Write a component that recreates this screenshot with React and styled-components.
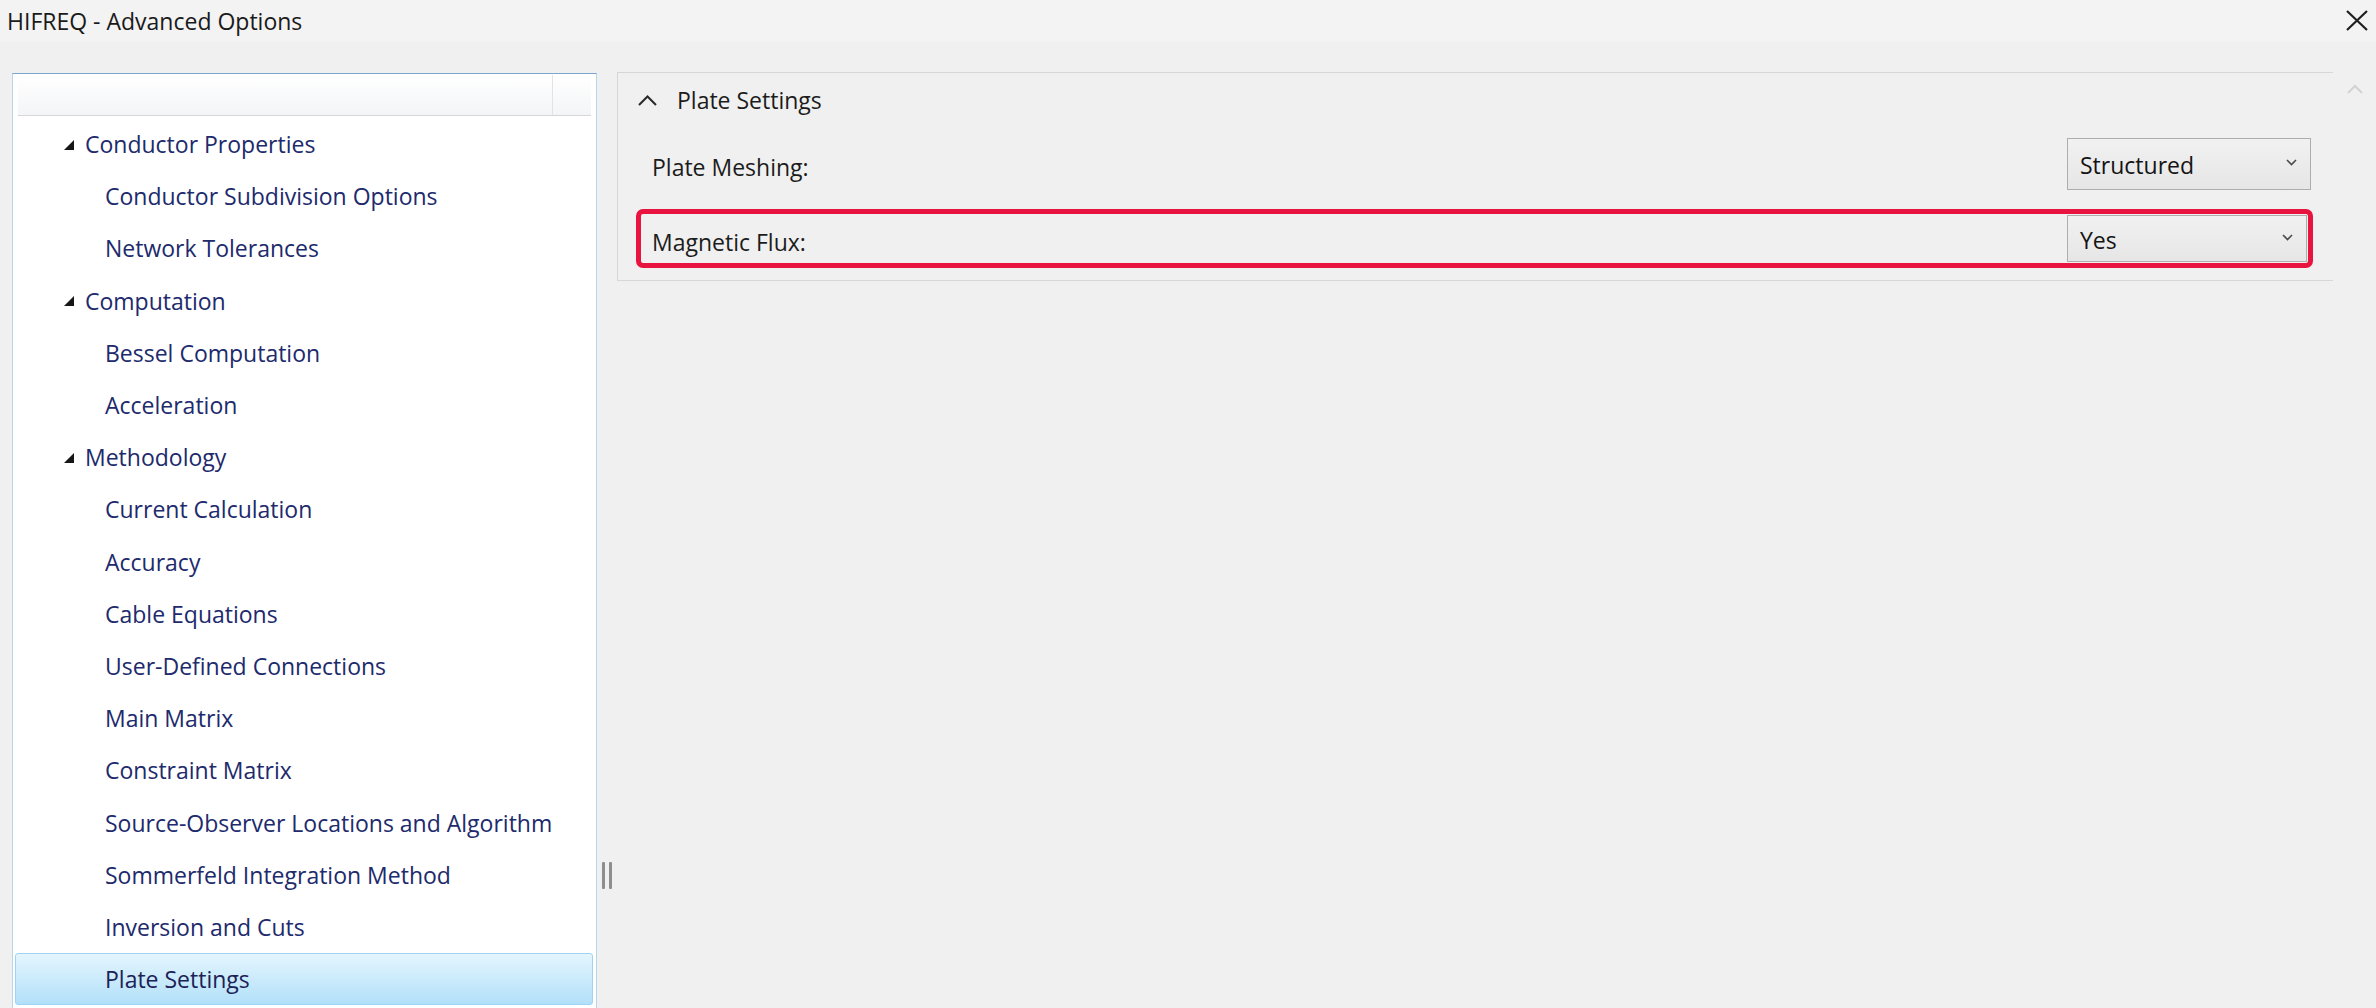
import React from 'react';
import styled, { createGlobalStyle } from 'styled-components';

const GlobalStyle = createGlobalStyle`
  html, body {
    margin: 0;
    padding: 0;
    background: #f0f0f0;
  }
  body {
    font-family: "Open Sans", "Noto Sans", "Liberation Sans", sans-serif;
  }
`;

const Window = styled.div`
  width: 2376px;
  height: 1008px;
  display: flex;
  flex-direction: column;
  overflow: hidden;
  background: #f0f0f0;
`;

const TitleBar = styled.div`
  height: 42px;
  display: flex;
  align-items: center;
  justify-content: space-between;
  padding: 0 7px 0 7px;
  background: #f3f3f3;
  color: #1a1a1a;
  font-size: 23px;
`;

const CloseButton = styled.div`
  width: 22px;
  height: 22px;
  margin-right: 1px;
  margin-top: -2px;
  display: flex;
  align-items: center;
  justify-content: center;
`;

const Body = styled.div`
  flex: 1;
  display: flex;
  padding: 31px 0 0 12px;
  min-height: 0;
`;

const TreePanel = styled.div`
  width: 585px;
  box-sizing: border-box;
  background: #ffffff;
  border: 1px solid #b9d4ec;
  border-top-color: #7ba4d4;
  border-bottom: none;
  display: flex;
  flex-direction: column;
`;

const TreeHeader = styled.div`
  height: 40px;
  margin: 1px 5px 0 5px;
  display: flex;
  background: linear-gradient(#ffffff, #f4f5f7);
  border-bottom: 1px solid #d6d6d6;
`;

const HeaderCell = styled.div`
  flex: ${p => (p.$grow ? 1 : 'none')};
  width: ${p => (p.$grow ? 'auto' : '38px')};
  border-left: ${p => (p.$grow ? 'none' : '1px solid #e3e3e3')};
`;

const TreeList = styled.div`
  padding: 2px 3px 0 2px;
  display: flex;
  flex-direction: column;
`;

const TreeRow = styled.div`
  height: 52.2px;
  box-sizing: border-box;
  display: flex;
  align-items: center;
  padding-left: ${p => (p.$level === 0 ? '46px' : '89px')};
  border: 1px solid ${p => (p.$selected ? '#9dd4f4' : 'transparent')};
  border-radius: 3px;
  background: ${p =>
    p.$selected ? 'linear-gradient(#e4f5fd, #b2e0f9)' : 'transparent'};
  color: ${p => (p.$selected ? '#1b2258' : '#202a6c')};
  font-size: 23px;
  white-space: nowrap;
`;

const Expander = styled.svg`
  width: 13px;
  height: 12px;
  margin-right: 10px;
  margin-top: 1px;
  flex: none;
`;

const Splitter = styled.div`
  width: 20px;
  display: flex;
  justify-content: center;
  align-items: flex-start;
`;

const Grip = styled.div`
  margin-top: 789px;
  width: 10px;
  height: 27px;
  display: flex;
  justify-content: space-between;
  span {
    width: 3px;
    height: 100%;
    background: #8e8e8e;
    border-radius: 1px;
  }
`;

const Content = styled.div`
  width: 1716px;
  display: flex;
  flex-direction: column;
  align-items: stretch;
`;

const Section = styled.div`
  margin-top: -1px;
  border-top: 1px solid #d7d7d7;
  border-left: 1px solid #d7d7d7;
  border-bottom: 1px solid #d7d7d7;
`;

const SectionHeader = styled.div`
  height: 54px;
  display: flex;
  align-items: center;
  padding-left: 20px;
  gap: 20px;
  font-size: 23px;
  color: #1c1c1c;
`;

const SectionBody = styled.div`
  display: flex;
  flex-direction: column;
  gap: 16px;
  padding: 7px 20px 12px 18px;
`;

const Row = styled.div`
  height: 59px;
  box-sizing: border-box;
  display: flex;
  align-items: center;
  padding-left: 11px;
  border: 5px solid ${p => (p.$highlight ? '#e8143f' : 'transparent')};
  border-radius: 7px;
`;

const Label = styled.div`
  font-size: 23px;
  color: #1c1c1c;
  padding-top: 6px;
`;

const Combo = styled.div`
  margin-left: auto;
  margin-right: ${p => (p.$highlight ? '1px' : '-3px')};
  width: ${p => (p.$highlight ? '240px' : '244px')};
  height: ${p => (p.$highlight ? '47px' : '52px')};
  flex: none;
  box-sizing: border-box;
  border: 1px solid #adadad;
  background: linear-gradient(#f1f1f1, #e6e6e6);
  display: flex;
  align-items: center;
  justify-content: space-between;
  padding: 3px 13px 0 12px;
  font-size: 23px;
  color: #141414;
`;

const Chevron = styled.svg`
  width: 11px;
  height: 7px;
  margin-top: -5px;
`;

const ScrollStrip = styled.div`
  flex: 1;
  display: flex;
  justify-content: center;
  padding-top: 11px;
`;

const tree = [
  { label: 'Conductor Properties', level: 0 },
  { label: 'Conductor Subdivision Options', level: 1 },
  { label: 'Network Tolerances', level: 1 },
  { label: 'Computation', level: 0 },
  { label: 'Bessel Computation', level: 1 },
  { label: 'Acceleration', level: 1 },
  { label: 'Methodology', level: 0 },
  { label: 'Current Calculation', level: 1 },
  { label: 'Accuracy', level: 1 },
  { label: 'Cable Equations', level: 1 },
  { label: 'User-Defined Connections', level: 1 },
  { label: 'Main Matrix', level: 1 },
  { label: 'Constraint Matrix', level: 1 },
  { label: 'Source-Observer Locations and Algorithm', level: 1 },
  { label: 'Sommerfeld Integration Method', level: 1 },
  { label: 'Inversion and Cuts', level: 1 },
  { label: 'Plate Settings', level: 1, selected: true },
];

const settings = [
  { label: 'Plate Meshing:', value: 'Structured' },
  { label: 'Magnetic Flux:', value: 'Yes', highlight: true },
];

const ComboChevron = () => (
  <Chevron viewBox="0 0 11 7">
    <polyline points="1,1 5.5,5.5 10,1" fill="none" stroke="#4a4a4a" strokeWidth="1.6" />
  </Chevron>
);

const App = () => {
  return (
    <Window>
      <GlobalStyle />
      <TitleBar>
        <span>HIFREQ - Advanced Options</span>
        <CloseButton>
          <svg width="22" height="21" viewBox="0 0 22 21">
            <path d="M1 1 L21 20 M21 1 L1 20" stroke="#1f1f1f" strokeWidth="2.2" fill="none" />
          </svg>
        </CloseButton>
      </TitleBar>
      <Body>
        <TreePanel>
          <TreeHeader>
            <HeaderCell $grow />
            <HeaderCell />
          </TreeHeader>
          <TreeList>
            {tree.map(item => (
              <TreeRow key={item.label} $level={item.level} $selected={item.selected}>
                {item.level === 0 && (
                  <Expander viewBox="0 0 13 12">
                    <polygon points="12,1 12,11 2,11" fill="#161616" />
                  </Expander>
                )}
                {item.label}
              </TreeRow>
            ))}
          </TreeList>
        </TreePanel>
        <Splitter>
          <Grip>
            <span />
            <span />
          </Grip>
        </Splitter>
        <Content>
          <Section>
            <SectionHeader>
              <svg width="19" height="11" viewBox="0 0 19 11">
                <polyline points="1,10 9.5,1.5 18,10" fill="none" stroke="#2a2a2a" strokeWidth="2" />
              </svg>
              <span>Plate Settings</span>
            </SectionHeader>
            <SectionBody>
              {settings.map(s => (
                <Row key={s.label} $highlight={s.highlight}>
                  <Label>{s.label}</Label>
                  <Combo $highlight={s.highlight}>
                    <span>{s.value}</span>
                    <ComboChevron />
                  </Combo>
                </Row>
              ))}
            </SectionBody>
          </Section>
        </Content>
        <ScrollStrip>
          <svg width="16" height="10" viewBox="0 0 16 10">
            <polyline points="1,9 8,2 15,9" fill="none" stroke="#d3d3d3" strokeWidth="2" />
          </svg>
        </ScrollStrip>
      </Body>
    </Window>
  );
};

export default App;
